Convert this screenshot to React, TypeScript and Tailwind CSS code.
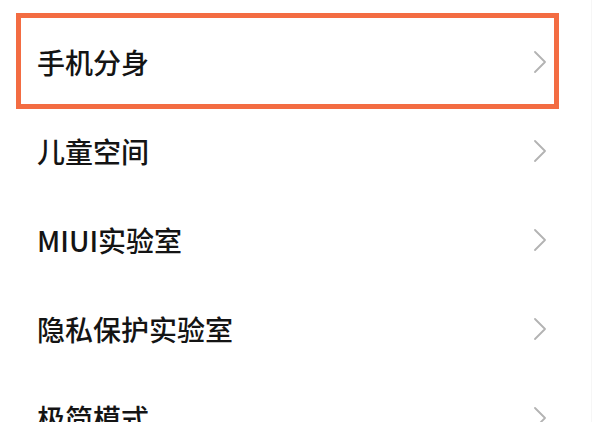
const items = ["手机分身", "儿童空间", "MIUI实验室", "隐私保护实验室", "极简模式"];

function Chevron() {
  return (
    <svg width="14" height="22" viewBox="0 0 14 22" fill="none" className="shrink-0">
      <polyline
        points="2,1 12,11 2,21"
        stroke="#b3b3b3"
        strokeWidth="1.8"
        strokeLinecap="round"
        strokeLinejoin="round"
      />
    </svg>
  );
}

export default function App() {
  return (
    <div className="relative h-[422px] w-[592px] overflow-hidden border-r border-[#f6f6f6] bg-white font-['Noto_Sans_CJK_SC',sans-serif]">
      <div className="flex flex-col pt-[17px]">
        {items.map((label) => (
          <div
            key={label}
            className="flex h-[89px] shrink-0 items-center justify-between pl-[37px] pr-[44px]"
          >
            <span className="text-[28px] font-medium leading-none text-[#141414]">
              {label}
            </span>
            <Chevron />
          </div>
        ))}
      </div>

      {/* highlight box */}
      <div className="absolute left-[16px] top-[13px] h-[96px] w-[543px] border-[5px] border-[#f36c42]" />
    </div>
  );
}
